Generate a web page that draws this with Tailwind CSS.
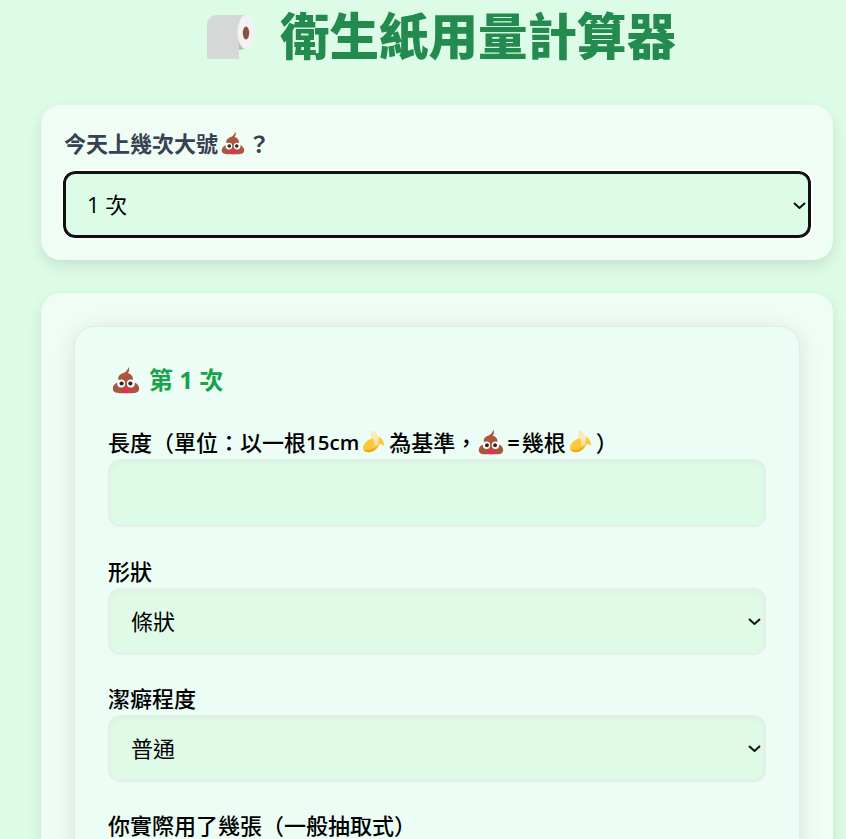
<!DOCTYPE html>
<html lang="zh-Hant">
<head>
  <meta charset="UTF-8" />
  <title>衛生紙用量計算器</title>
  <script src="https://cdn.jsdelivr.net/npm/@tailwindcss/browser@4"></script>
</head>
<body class="bg-[#dcfce7] h-[839px] overflow-hidden font-['Open_Sans','Noto_Sans_CJK_TC',sans-serif]">
  <svg width="0" height="0" class="absolute">
    <defs>
      <symbol id="poo" viewBox="0 0 32 32">
        <path fill="#a9583d" d="M19 1c1 3 1 5-1 7 4 1 6 4 6 7 0 1 0 2-1 3 5 1 8 4 8 8 0 4-4 5-8 5H9c-4 0-8-1-8-5 0-4 3-7 8-8-1-1-2-2-2-4 0-3 3-5 6-6 3-1 5-4 6-7z"/>
        <circle cx="10.500" cy="20" r="4.500" fill="#fff"/><circle cx="21.500" cy="20" r="4.500" fill="#fff"/>
        <circle cx="11" cy="20" r="2.400" fill="#33262b"/><circle cx="21" cy="20" r="2.400" fill="#33262b"/>
        <path fill="#f5245f" d="M11 25.500c3 1 7 1 10 0 0 3.500-2 5.500-5 5.500s-5-2-5-5.500z"/>
      </symbol>
      <symbol id="banana" viewBox="4 2 26 26">
        <path fill="#ffe9b8" d="M14 3c3-1 6 1 7 5 1 4 1 8 1 11h-6C15 14 13 8 14 3z"/>
        <path fill="#fdc93b" d="M5 22c0-5 5-10 11-11 1 3 1 5 2 8l3-1c1-3 1-6 1-9 3 1 6 5 6 10-2-1-3-1-5-2-1 5-6 9-11 9-4 0-7-1-7-4z"/>
        <path fill="#f0a823" d="M7 23c4 1 9 0 14-4-2 4-6 7-9 7-3 0-6-1-5-3z"/>
      </symbol>
    </defs>
  </svg>

  <div class="ml-[41px] w-[792px]">
    <h1 class="flex items-center justify-center h-[73px] pl-[8px] pb-[5px] text-[49.500px] leading-[60px] font-black text-[#228b4d] font-['Noto_Sans_CJK_TC',sans-serif]">
      <svg class="w-[50px] h-[46px] mr-[24px] mt-[5px]" viewBox="0 0 50 46">
        <path fill="#d6d8d8" d="M11 1h29v34l-7 1v9H1V12C1 5 5 1 11 1z"/>
        <path fill="#b9bcbc" d="M33 28l8 6-8 2z"/>
        <ellipse cx="40" cy="18" rx="8.500" ry="17" fill="#f2f2f2"/>
        <ellipse cx="40" cy="19" rx="3.200" ry="6.500" fill="#8a5240"/>
      </svg>
      衛生紙用量計算器
    </h1>

    <section class="mt-[32px] bg-[#f0fdf4] rounded-[20px] shadow-[0_6px_14px_rgba(0,0,0,0.1)] px-[22px] pt-[23px] pb-[22px]">
      <label class="flex items-center h-[30px] pl-[1px] mb-[13px] text-[22px] font-semibold text-[#374151]">
        今天上幾次大號<svg class="w-[24px] h-[24px] mx-[3px]"><use href="#poo"/></svg>？
      </label>
      <div class="relative">
        <select class="block w-full h-[67px] pl-[21px] appearance-none text-[22px] text-black bg-[#dcfce7] rounded-[12px] border-[3px] border-[#111] outline-[2px] outline-white">
          <option>1 次</option>
        </select>
        <svg class="absolute right-[5px] top-[31px] w-[13px] h-[7px]" viewBox="0 0 13 7"><path d="M1 1l5.500 5L12 1" fill="none" stroke="#111" stroke-width="2"/></svg>
      </div>
    </section>

    <section class="mt-[33px] bg-[#f0fdf4] rounded-[20px] shadow-[0_6px_14px_rgba(0,0,0,0.1)] px-[33px] pt-[33px] pb-[33px]">
      <div class="bg-[#ecfdf5] border border-[#e5e7eb] rounded-[20px] shadow-[0_4px_24px_rgba(0,0,0,0.1)] px-[33px] pt-[32px] pb-[32px]">
        <h2 class="flex items-center h-[42px] pl-[4px] mb-[26px] text-[24px] font-bold text-[#16a34a]">
          <svg class="w-[28px] h-[28px] mr-[9px]"><use href="#poo"/></svg>第 1 次
        </h2>

        <label class="flex items-center h-[30px] mb-[2px] text-[22px] font-medium text-black">
          長度（單位：以一根<span class="text-[20.500px] font-semibold">15cm</span><svg class="w-[24px] h-[24px] mx-[3px]"><use href="#banana"/></svg>為基準，<svg class="w-[26px] h-[26px] ml-[1px] mr-[3px]"><use href="#poo"/></svg><span class="font-semibold mr-[2px]">=</span>幾根<svg class="w-[24px] h-[24px] mx-[3px]"><use href="#banana"/></svg>）
        </label>
        <input class="block w-full h-[68px] px-[20px] text-[22px] bg-[#dcfce7] rounded-[12px] border-2 border-[#e5efe8] shadow-[inset_0_2px_4px_rgba(0,0,0,0.03)]" />

        <label class="flex items-center h-[30px] mt-[29px] mb-[2px] text-[22px] font-medium text-black">形狀</label>
        <div class="relative">
          <select class="block w-full h-[67px] pl-[21px] appearance-none text-[22px] text-black bg-[#dffbe8] rounded-[12px] border-2 border-[#e5efe8] shadow-[inset_0_2px_4px_rgba(0,0,0,0.03)]">
            <option>條狀</option>
          </select>
          <svg class="absolute right-[5px] top-[30px] w-[13px] h-[7px]" viewBox="0 0 13 7"><path d="M1 1l5.500 5L12 1" fill="none" stroke="#111" stroke-width="2"/></svg>
        </div>

        <label class="flex items-center h-[30px] mt-[28px] mb-[2px] text-[22px] font-medium text-black">潔癖程度</label>
        <div class="relative">
          <select class="block w-full h-[67px] pl-[21px] appearance-none text-[22px] text-black bg-[#dffbe8] rounded-[12px] border-2 border-[#e5efe8] shadow-[inset_0_2px_4px_rgba(0,0,0,0.03)]">
            <option>普通</option>
          </select>
          <svg class="absolute right-[5px] top-[30px] w-[13px] h-[7px]" viewBox="0 0 13 7"><path d="M1 1l5.500 5L12 1" fill="none" stroke="#111" stroke-width="2"/></svg>
        </div>

        <label class="flex items-center h-[30px] mt-[28px] text-[22px] font-medium text-black">你實際用了幾張（一般抽取式）</label>
      </div>
    </section>
  </div>
</body>
</html>
